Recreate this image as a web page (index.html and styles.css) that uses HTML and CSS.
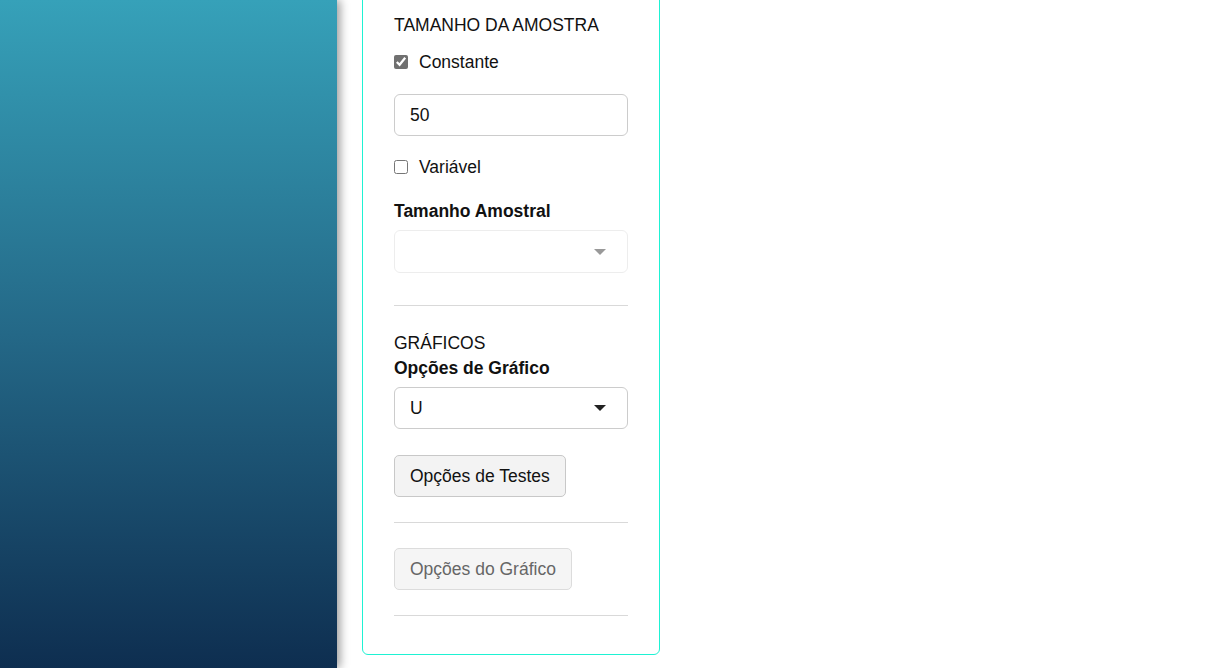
FILE: index.html
```html
<!DOCTYPE html>
<html lang="pt-BR">
<head>
    <meta charset="UTF-8">
    <meta name="viewport" content="width=device-width, initial-scale=1.0">
    <title>Configuração da amostra</title>
    <link rel="stylesheet" href="styles.css">
</head>
<body>
    <div class="sidebar"></div>

    <div class="main">
        <div class="card">
            <div class="section-title">TAMANHO DA AMOSTRA</div>

            <label class="check-row check-first">
                <input type="checkbox" checked> Constante
            </label>
            <input type="text" class="text-input" value="50">

            <label class="check-row check-second">
                <input type="checkbox"> Variável
            </label>

            <div class="field-label label-amostral">Tamanho Amostral</div>
            <div class="select-wrap disabled">
                <select disabled><option></option></select>
                <svg class="arrow" width="12" height="6" viewBox="0 0 12 6"><path d="M0 0 L12 0 L6 6 Z"/></svg>
            </div>

            <hr class="divider first-divider">

            <div class="section-title graficos">GRÁFICOS</div>
            <div class="field-label">Opções de Gráfico</div>
            <div class="select-wrap">
                <select><option>U</option></select>
                <svg class="arrow" width="12" height="6" viewBox="0 0 12 6"><path d="M0 0 L12 0 L6 6 Z"/></svg>
            </div>

            <button class="btn btn-testes">Opções de Testes</button>
            <hr class="divider">
            <button class="btn" disabled>Opções do Gráfico</button>
            <hr class="divider">
        </div>
    </div>
</body>
</html>
```

FILE: styles.css
```css
body {
    margin: 0;
    font-family: "Liberation Sans", Arial, sans-serif;
    font-size: 17.5px;
    color: #111;
    background: #fff;
    display: flex;
    height: 100vh;
    overflow: hidden;
}
.sidebar {
    width: 337px;
    flex-shrink: 0;
    height: 100vh;
    background-image: linear-gradient(180deg, rgb(54, 161, 185), rgb(36, 104, 135) 50%, rgb(14, 46, 80));
    box-shadow: 3px 0 9px rgba(0, 0, 0, 0.4);
}
.main {
    padding-left: 25px;
}
.card {
    width: 234px;
    margin-top: -10px;
    padding: 24px 31px 38px;
    border: 1px solid #1ef2d3;
    border-radius: 6px;
    display: flex;
    flex-direction: column;
    align-items: flex-start;
}
.section-title {
    line-height: 20px;
}
.check-row {
    display: flex;
    align-items: center;
    gap: 11px;
    line-height: 20px;
}
.check-row input {
    width: 14px;
    height: 14px;
    margin: 0;
    accent-color: #707070;
}
.check-first {
    margin-top: 17px;
}
.text-input {
    box-sizing: border-box;
    width: 234px;
    height: 42px;
    margin-top: 22px;
    padding: 0 15px;
    border: 1px solid #ccc;
    border-radius: 6px;
    font: inherit;
    color: #111;
}
.check-second {
    margin-top: 21px;
}
.field-label {
    font-weight: bold;
    line-height: 20px;
}
.label-amostral {
    margin-top: 24px;
}
.select-wrap {
    position: relative;
    width: 234px;
    margin-top: 9px;
}
.select-wrap select {
    box-sizing: border-box;
    width: 100%;
    height: 42px;
    padding: 0 15px;
    border: 1px solid #ccc;
    border-radius: 6px;
    background: #fff;
    font: inherit;
    color: #111;
    appearance: none;
    -webkit-appearance: none;
}
.select-wrap .arrow {
    position: absolute;
    right: 22px;
    top: 18px;
    fill: #222;
}
.select-wrap.disabled select {
    height: 43px;
    border-color: #e6e6e6;
}
.select-wrap.disabled .arrow {
    top: 19px;
    fill: #999;
}
.divider {
    width: 234px;
    margin: 25px 0 0;
    border: 0;
    border-top: 1px solid #d9d9d9;
}
.first-divider {
    margin-top: 32px;
}
.graficos {
    margin-top: 27px;
    margin-bottom: 5px;
}
.btn {
    height: 42px;
    margin-top: 25px;
    padding: 0 15px;
    border: 1px solid #c8c8c8;
    border-radius: 5px;
    background: #f3f3f3;
    font: inherit;
    color: #111;
}
.btn-testes {
    margin-top: 26px;
}
.btn:disabled {
    background: #f5f5f5;
    border-color: #dcdcdc;
    color: #666;
}
```
